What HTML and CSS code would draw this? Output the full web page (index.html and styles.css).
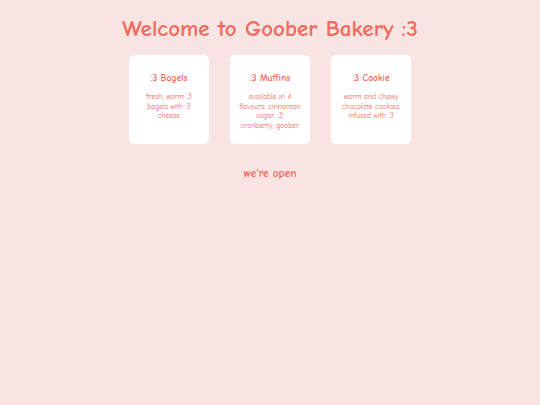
FILE: index.html
```html
<!DOCTYPE html>
<html>
<head>
<meta charset="utf-8">
<link rel="stylesheet" href="styles.css">
</head>
<body>
<h1 class="title">Welcome to Goober Bakery :3</h1>
<div class="cards">
  <div class="card">
    <h2 class="card-title">:3 Bagels</h2>
    <p class="card-text">fresh, warm :3 bagels with :3 cheese</p>
  </div>
  <div class="card">
    <h2 class="card-title">:3 Muffins</h2>
    <p class="card-text">available in 4 flavours: cinnamon sugar, :3, cranberry, goober.</p>
  </div>
  <div class="card">
    <h2 class="card-title">:3 Cookie</h2>
    <p class="card-text">warm and chewy chocolate cookies, infused with :3</p>
  </div>
</div>
<p class="status">we're open</p>
</body>
</html>
```
FILE: styles.css
```css
html, body {
  margin: 0;
  padding: 0;
}
body {
  background: #f8e4e2;
  color: #f06a5e;
  font-family: "Comic Sans MS", "Comic Neue", "DejaVu Sans", sans-serif;
  text-align: center;
  min-height: 405px;
}
.title {
  margin: 0;
  padding-top: 15px;
  font-size: 23px;
  line-height: 28px;
  font-weight: bold;
}
.cards {
  display: flex;
  justify-content: center;
  gap: 21px;
  margin-top: 12px;
}
.card {
  width: 80px;
  height: 89px;
  box-sizing: border-box;
  background: #ffffff;
  border-radius: 5px;
  padding: 17px 9px 0;
}
.card-title {
  margin: 0;
  font-size: 9.5px;
  line-height: 12px;
  font-weight: bold;
}
.card-text {
  margin: 8px 0 0;
  font-size: 7.6px;
  line-height: 9.7px;
}
.status {
  margin: 23px 0 0;
  font-size: 11.5px;
  line-height: 14px;
  font-weight: bold;
}
```
